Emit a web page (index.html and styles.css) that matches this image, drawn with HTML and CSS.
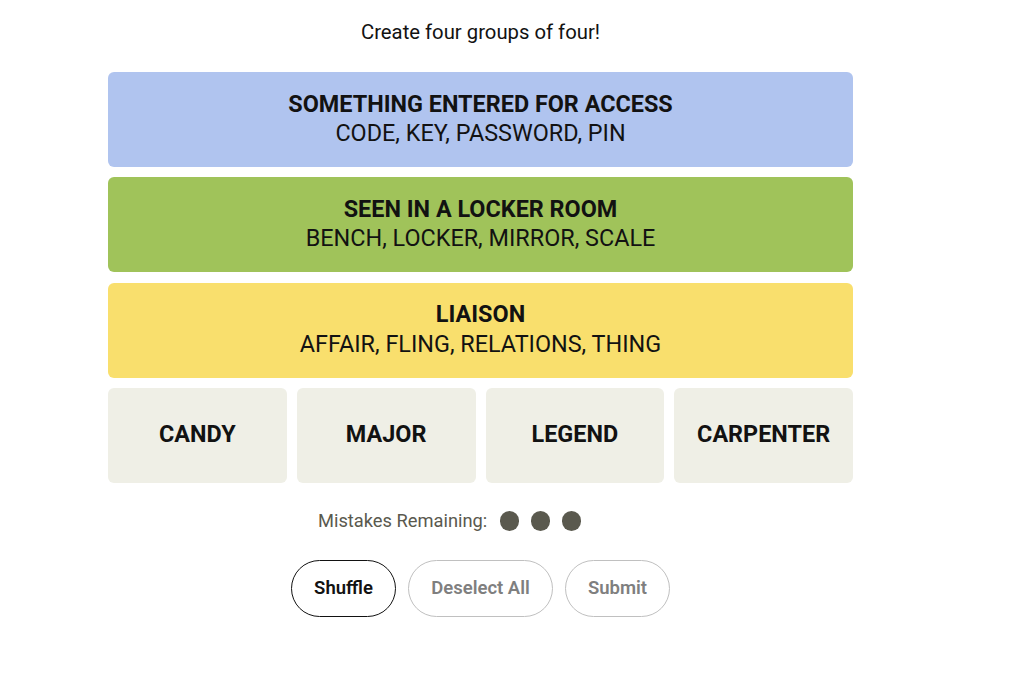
FILE: index.html
```html
<!DOCTYPE html>
<html lang="en">
<head>
  <meta charset="UTF-8">
  <meta name="viewport" content="width=device-width, initial-scale=1.0">
  <title>Connections</title>
  <link rel="stylesheet" href="styles.css">
</head>
<body>
  <div class="game">
    <p class="intro">Create four groups of four!</p>
    <div class="board">
      <div class="group blue">
        <h3>SOMETHING ENTERED FOR ACCESS</h3>
        <p>CODE, KEY, PASSWORD, PIN</p>
      </div>
      <div class="group green">
        <h3>SEEN IN A LOCKER ROOM</h3>
        <p>BENCH, LOCKER, MIRROR, SCALE</p>
      </div>
      <div class="group yellow">
        <h3>LIAISON</h3>
        <p>AFFAIR, FLING, RELATIONS, THING</p>
      </div>
      <div class="tile">CANDY</div>
      <div class="tile">MAJOR</div>
      <div class="tile">LEGEND</div>
      <div class="tile">CARPENTER</div>
    </div>
    <div class="mistakes">
      <span class="label">Mistakes Remaining:</span>
      <span class="dot"></span>
      <span class="dot"></span>
      <span class="dot"></span>
    </div>
    <div class="controls">
      <button class="btn active">Shuffle</button>
      <button class="btn wide">Deselect All</button>
      <button class="btn">Submit</button>
    </div>
  </div>
</body>
</html>
```

FILE: styles.css
```css
*{
  margin: 0;
  padding: 0;
  box-sizing: border-box;
}
body{
  background: #fff;
  color: #121212;
  font-family: Roboto, "Liberation Sans", sans-serif;
}
.game{
  width: 745px;
  margin-left: 108px;
  display: flex;
  flex-direction: column;
  align-items: center;
}
.intro{
  font-size: 20.3px;
  line-height: 24px;
  margin-top: 20px;
  height: 52px;
}
.board{
  width: 100%;
  display: grid;
  grid-template-columns: repeat(4, 1fr);
  grid-auto-rows: 95px;
  gap: 10.3px 10px;
}
.group{
  grid-column: 1 / -1;
  border-radius: 6px;
  display: flex;
  flex-direction: column;
  align-items: center;
  justify-content: center;
  padding-bottom: 1px;
  font-size: 23.4px;
  line-height: 29.5px;
}
.group h3{
  font-size: 23.4px;
  font-weight: 700;
}
.group p{
  font-weight: 400;
}
.blue{
  background: #b0c4ef;
}
.green{
  background: #a0c35a;
}
.yellow{
  background: #f9df6d;
}
.tile{
  background: #efefe6;
  border-radius: 6px;
  display: flex;
  align-items: center;
  justify-content: center;
  padding-bottom: 3px;
  font-size: 23.4px;
  font-weight: 700;
}
.mistakes{
  align-self: flex-start;
  margin-left: 210px;
  display: flex;
  align-items: center;
  gap: 11.5px;
  margin-top: 26px;
  height: 24px;
  font-size: 18.3px;
  color: #5a594e;
}
.label{
  margin-right: 1px;
}
.dot{
  width: 19.5px;
  height: 19.5px;
  border-radius: 50%;
  background: #5a594e;
}
.controls{
  display: flex;
  gap: 12px;
  margin-top: 27px;
}
.btn{
  width: 105px;
  height: 57px;
  border-radius: 30px;
  border: 1px solid #c0c0c0;
  background: #fff;
  color: #7f7f7f;
  font-family: Roboto, "Liberation Sans", sans-serif;
  font-size: 18.5px;
  font-weight: 600;
}
.btn.wide{
  width: 145px;
}
.btn.active{
  border-color: #121212;
  color: #121212;
}
```
